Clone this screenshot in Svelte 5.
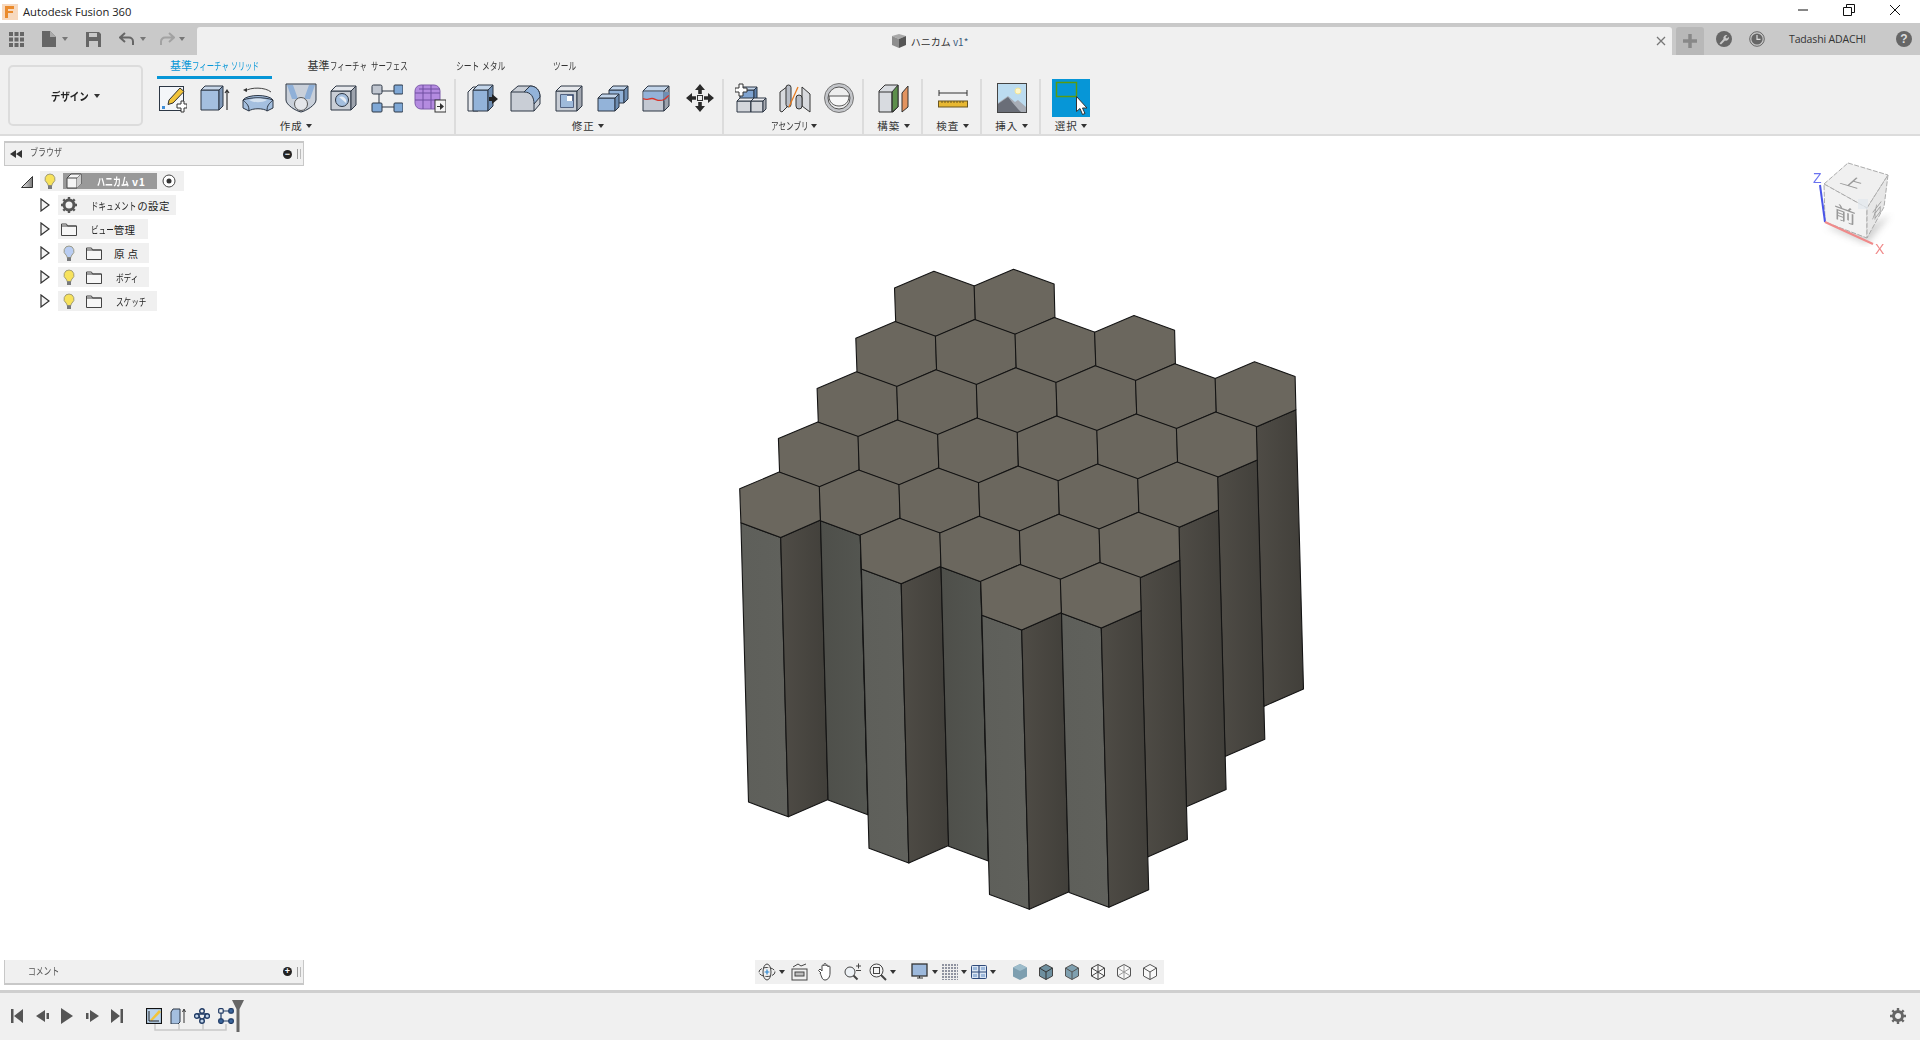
<script lang="ts">
	// hexagon lattice of the honeycomb model, numbers measured off the viewport
	const origin = { x: 933.9, y: 271.3 };
	const stepA = { x: 79.6, y: -2 };
	const stepB = { x: -38.7, y: 50.2 };
	const depth = { x: 7.6, y: 279.3 };
	const rows: [number, number][] = [[0, 1], [0, 3], [0, 5], [0, 5], [0, 5], [2, 5], [4, 5]];
	const shaded = new Set(['4-1', '5-3', '3-0', '3-1']);

	const shape = {
		t: [0, 0],
		rt: [40.6, 14.7],
		rb: [41.4, 48],
		b: [1.6, 65.4],
		lb: [-38.2, 50.7],
		lt: [-39.4, 16.7]
	};

	const pts = (list: number[][]) => list.map((p) => `${p[0].toFixed(1)},${p[1].toFixed(1)}`).join(' ');

	const cells: { key: string; top: string; left: string; right: string }[] = [];
	rows.forEach(([from, to], i) => {
		for (let j = from; j <= to; j++) {
			const x = origin.x + stepA.x * j + stepB.x * i;
			const y = origin.y + stepA.y * j + stepB.y * i;
			const at = (v: number[]) => [x + v[0], y + v[1]];
			const down = (v: number[]) => [x + v[0] + depth.x, y + v[1] + depth.y];
			cells.push({
				key: `${i}-${j}`,
				top: pts([shape.t, shape.rt, shape.rb, shape.b, shape.lb, shape.lt].map(at)),
				left: pts([at(shape.lb), at(shape.b), down(shape.b), down(shape.lb)]),
				right: pts([at(shape.b), at(shape.rb), down(shape.rb), down(shape.b)])
			});
		}
	});

	const tree = [
		{ kana: 'ビュー', rest: '管理', bulb: '', width: 90, pad: 3 },
		{ kana: '', rest: '原 点', bulb: '#b9cdf2', width: 91, pad: 1 },
		{ kana: 'ボディ', rest: '', bulb: '#f7e25c', width: 91, pad: 3 },
		{ kana: 'スケッチ', rest: '', bulb: '#f7e25c', width: 99, pad: 3 }
	];
</script>

<!-- the UI font has tall, narrow kana: squeeze full-width glyphs to the pitch -->
{#snippet kana(text, size = 10.5, pitch = 7.6)}
	<span
		class="kana"
		style="font-size: {size}px; transform: scaleX({(pitch / size).toFixed(3)}); margin-right: {(-text.length * (size - pitch)).toFixed(1)}px"
	>{text}</span>
{/snippet}

{#snippet box(x, y, w, h, d, front, top, side)}
	<polygon points="{x},{y} {x + w},{y} {x + w},{y + h} {x},{y + h}" fill={front} stroke="#2c3644" />
	<polygon points="{x},{y} {x + d},{y - d} {x + w + d},{y - d} {x + w},{y}" fill={top} stroke="#2c3644" />
	<polygon points="{x + w},{y} {x + w + d},{y - d} {x + w + d},{y + h - d} {x + w},{y + h}" fill={side} stroke="#2c3644" />
{/snippet}

{#snippet bulb(color)}
	<svg class="bulb" viewBox="0 0 12 17" width="12" height="17">
		<path d="M6 1a5 5 0 0 0-3 9c.7.6 1 1.400 1 2.500h4c0-1.100.3-1.900 1-2.500a5 5 0 0 0-3-9z" fill={color} stroke="#8d8a70" stroke-width=".8" />
		<rect x="4" y="12.500" width="4" height="3.500" fill="#77797c" />
	</svg>
{/snippet}

{#snippet folder()}
	<svg class="folder" viewBox="0 0 16 13" width="16" height="13">
		<path d="M.5 12.500V1h5l1 2h9v9.500z" fill="#f6f6f6" stroke="#444" />
		<path d="M.5 3h15" stroke="#444" />
	</svg>
{/snippet}

{#snippet expander()}
	<svg class="expander" viewBox="0 0 10 14" width="10" height="14"><path d="M1 1l8 6-8 6z" fill="#f4f4f4" stroke="#333" stroke-width="1.200" /></svg>
{/snippet}

<div class="app">
	<header class="titlebar">
		<svg class="logo" viewBox="0 0 16 16" width="16" height="16">
			<rect width="16" height="16" fill="#f7d9bf" />
			<path d="M3 2h9v3H6v2h5v2H6v5H3z" fill="#ea8a2c" />
		</svg>
		<span class="app-name">Autodesk Fusion 360</span>
		<div class="winctl">
			<svg viewBox="0 0 12 12" width="12" height="12"><path d="M1 6h10" stroke="#111" /></svg>
			<svg viewBox="0 0 12 12" width="12" height="12"><path d="M.5 3.500h8v8h-8zM3.500 3.500v-3h8v8h-3" fill="none" stroke="#111" /></svg>
			<svg viewBox="0 0 12 12" width="12" height="12"><path d="M1 1l10 10M11 1L1 11" stroke="#111" /></svg>
		</div>
	</header>

	<div class="appbar">
		<div class="quick">
			<svg class="q-grid" viewBox="0 0 15 15" width="15" height="15" fill="#666">
				<rect width="4" height="4" /><rect x="5.500" width="4" height="4" /><rect x="11" width="4" height="4" />
				<rect y="5.500" width="4" height="4" /><rect x="5.500" y="5.500" width="4" height="4" /><rect x="11" y="5.500" width="4" height="4" />
				<rect y="11" width="4" height="4" /><rect x="5.500" y="11" width="4" height="4" /><rect x="11" y="11" width="4" height="4" />
			</svg>
			<svg class="q-file" viewBox="0 0 14 16" width="14" height="16"><path d="M0 0h8l6 6v10H0z" fill="#666" /><path d="M8 0v6h6" fill="#aaa" /></svg>
			<i class="caret q-c1"></i>
			<svg class="q-save" viewBox="0 0 15 15" width="15" height="15"><path d="M0 0h13l2 2v13H0z" fill="#666" /><rect x="3" y="1" width="8" height="4" fill="#c8c8c8" /><rect x="3" y="9" width="9" height="6" fill="#c8c8c8" /></svg>
			<svg class="q-undo" viewBox="0 0 15 14" width="15" height="14"><path d="M6 1L1 5.500 6 10M1.500 5.500H10a4 4 0 0 1 4 4V13" fill="none" stroke="#666" stroke-width="2" /></svg>
			<i class="caret q-c2"></i>
			<svg class="q-redo" viewBox="0 0 15 14" width="15" height="14"><path d="M9 1l5 4.500L9 10M13.500 5.500H5a4 4 0 0 0-4 4V13" fill="none" stroke="#a2a2a2" stroke-width="2" /></svg>
			<i class="caret q-c3"></i>
		</div>
		<div class="doc-tab">
			<div class="doc-title">
				<svg viewBox="0 0 16 16" width="16" height="16"><path d="M1 3l7-2 7 2-7 3z" fill="#a9a9a9" /><path d="M1 3l7 3v9l-7-3z" fill="#8e8e8e" /><path d="M15 3L8 6v9l7-3z" fill="#555" /></svg>
				<span>ハニカム <b>v1*</b></span>
			</div>
			<svg class="tab-x" viewBox="0 0 10 10" width="10" height="10"><path d="M1 1l8 8M9 1L1 9" stroke="#777" stroke-width="1.300" /></svg>
		</div>
		<div class="plus-btn"><svg viewBox="0 0 14 14" width="14" height="14"><path d="M7 0v14M0 7h14" stroke="#888" stroke-width="3.500" /></svg></div>
		<div class="account">
			<svg class="a-wrench" viewBox="0 0 16 16" width="16" height="16">
				<circle cx="8" cy="8" r="8" fill="#666" />
				<path d="M3.500 12.500l4-4.500a3 3 0 0 1 3.800-3.800L9.500 6l.5 1 1 .5 1.800-1.800A3 3 0 0 1 9 9.500l-4 4z" fill="#c8c8c8" />
			</svg>
			<svg class="a-clock" viewBox="0 0 16 16" width="16" height="16">
				<circle cx="8" cy="8" r="7.300" fill="#c8c8c8" stroke="#666" />
				<circle cx="8" cy="8" r="5.600" fill="#666" />
				<path d="M8 4v4.300h3.500" fill="none" stroke="#ddd" stroke-width="1.200" />
			</svg>
			<span class="user">Tadashi ADACHI</span>
			<div class="help">?</div>
		</div>
	</div>

	<div class="ribbon">
		<div class="mode"><span>{@render kana('デザイン', 11, 9.4)}</span><i class="caret dark"></i></div>
		<div class="ribbon-main">
			<nav class="tabs">
				<span class="tab active">基準{@render kana('フィーチャ', 10.5, 7.4)} {@render kana('ソリッド', 10.5, 7)}</span>
				<span class="tab">基準{@render kana('フィーチャ', 10.5, 7.4)}&nbsp;&nbsp;{@render kana('サーフェス', 10.5, 7.4)}</span>
				<span class="tab t3">{@render kana('シート', 10.5, 7.8)}&nbsp;{@render kana('メタル', 10.5, 7.8)}</span>
				<span class="tab t4">{@render kana('ツール', 10.5, 7.7)}</span>
			</nav>
			<div class="groups">
				<section class="group g-create">
					<div class="tools">
						<div class="tool">
							<svg viewBox="0 0 30 30" width="30" height="30">
								<rect x="2.500" y="3.500" width="24" height="24" fill="#f4f6f9" stroke="#2c3644" />
								<rect x="5" y="23" width="3" height="3" fill="#3f8fd8" />
								<path d="M12 17l11-12 4 3.500L16 20l-5 1.500z" fill="#f2c43a" stroke="#333" />
								<path d="M20 21h4v-3h3v3h3v4h-3v4h-3v-4h-4z" fill="#fff" stroke="#333" />
							</svg>
						</div>
						<div class="tool">
							<svg viewBox="0 0 30 30" width="30" height="30">
								{@render box(1, 7, 18, 20, 4, '#a4bfdf', '#c9d8ea', '#7f98b8')}
								<path d="M27 27V8M25 10l2-3 2 3" fill="none" stroke="#333" stroke-width="1.200" />
							</svg>
						</div>
						<div class="tool">
							<svg viewBox="0 0 32 30" width="32" height="30">
								<path d="M3 8c6-4 20-4 26 1" fill="none" stroke="#444" />
								<path d="M1 7l4-2v4z" fill="#333" />
								<path d="M1 17c4-6 26-6 30 0v8l-6 3c-3-3-15-3-18 0l-6-3z" fill="#a4bfdf" stroke="#2c3644" />
								<path d="M1 17c4 4 6 5 6 11M31 17c-4 4-6 5-6 11M1 17c8-3 22-3 30 0" fill="none" stroke="#2c3644" />
								<path d="M7 17c5-2 13-2 18 0-5 3-13 3-18 0z" fill="#d5e2f0" />
							</svg>
						</div>
						<div class="tool">
							<svg viewBox="0 0 32 30" width="32" height="30">
								<path d="M1 1h30v16c0 5-10 11-15 12C11 28 1 22 1 17z" fill="#c9d0da" stroke="#2c3644" />
								<path d="M2 2h6l5 14H7zM30 2h-6l-5 14h6z" fill="#8fb0d8" />
								<circle cx="16" cy="21" r="6.500" fill="#e4e6ea" stroke="#555" />
							</svg>
						</div>
						<div class="tool">
							<svg viewBox="0 0 30 30" width="30" height="30">
								{@render box(2, 8, 20, 19, 5, '#c9ced6', '#e6e8ec', '#9da3ad')}
								<circle cx="13" cy="17" r="6.500" fill="#a4bfdf" stroke="#2c3644" />
								<path d="M10 14a5 5 0 0 1 7 6" fill="#e8eef6" />
							</svg>
						</div>
						<div class="tool">
							<svg viewBox="0 0 32 30" width="32" height="30" stroke="#2c3644">
								<path d="M8 8h16M8 8v16M8 24h16" />
								<rect x="1" y="2" width="10" height="9" rx="1.500" fill="#c0c6d0" />
								<rect x="23" y="2" width="9" height="9" rx="1" fill="#7fa8d6" />
								<rect x="1" y="20" width="10" height="9" rx="1" fill="#7fa8d6" />
								<rect x="23" y="20" width="9" height="9" rx="1" fill="#7fa8d6" />
							</svg>
						</div>
						<div class="tool">
							<svg viewBox="0 0 32 30" width="32" height="30">
								<rect x="1" y="2" width="25" height="24" rx="6" fill="#b48be0" stroke="#7e5cab" />
								<path d="M1 10h25M1 17h25M9 2v24M17 2v24M5 6h21" stroke="#6e4ea0" fill="none" />
								<rect x="21" y="17" width="11" height="12" fill="#f4f4f4" stroke="#333" />
								<path d="M23 23h3v-3l4 3.500-4 3.500v-3h-3z" fill="#333" />
							</svg>
						</div>
					</div>
					<div class="label">作成 <i class="caret dark"></i></div>
				</section>

				<section class="group g-modify">
					<div class="tools">
						<div class="tool">
							<svg viewBox="0 0 32 30" width="32" height="30">
								<path d="M1 9l5-5h5v24H1z" fill="#e6e8ec" stroke="#2c3644" />
								{@render box(6, 7, 15, 21, 5, '#93b3d9', '#c3d5ea', '#6f8eb3')}
								<path d="M22 14h3v-3l6 5-6 5v-3h-3z" fill="#222" />
							</svg>
						</div>
						<div class="tool">
							<svg viewBox="0 0 32 30" width="32" height="30">
								<path d="M1 9l7-6h12c6 0 10 4 10 11v7l-6 7H1z" fill="#c9ced6" stroke="#2c3644" />
								<path d="M14 9l6-6c6 0 10 4 10 11l-6 7c0-7-3-12-10-12z" fill="#93b3d9" stroke="#2c3644" />
								<path d="M1 9h13M24 21v7" stroke="#2c3644" />
							</svg>
						</div>
						<div class="tool">
							<svg viewBox="0 0 30 30" width="30" height="30">
								{@render box(2, 8, 21, 20, 5, '#c9ced6', '#e6e8ec', '#a3a8b1')}
								<rect x="7" y="12" width="12" height="12" fill="#fff" stroke="#2c3f66" stroke-width="1.500" />
								<path d="M7 12h6v6h6v6H7z" fill="#9fbadb" />
							</svg>
						</div>
						<div class="tool">
							<svg viewBox="0 0 32 30" width="32" height="30">
								{@render box(12, 7, 15, 13, 4, '#93b3d9', '#c3d5ea', '#6f8eb3')}
								{@render box(1, 15, 17, 13, 4, '#93b3d9', '#c3d5ea', '#6f8eb3')}
							</svg>
						</div>
						<div class="tool">
							<svg viewBox="0 0 30 30" width="30" height="30">
								{@render box(2, 8, 21, 20, 5, '#c3c8d2', '#c3d5ea', '#9da3ad')}
								<path d="M2.500 8.500h20v8c-5 3-7-1-11-1s-5 2-9 0z" fill="#93b3d9" />
								<path d="M23 9h5v5c-2 1-3 3-5 4z" fill="#6f8eb3" />
								<path d="M2 15.500c4 2 5 0 9 0s6 4 12 1c2-1 3-3 5-4" fill="none" stroke="#d8342a" stroke-width="1.300" />
							</svg>
						</div>
						<div class="tool">
							<svg viewBox="0 0 30 30" width="30" height="30">
								<path d="M15 1l5 6h-3.200v4h-3.600V7H10zM15 29l-5-6h3.200v-4h3.600v4H20zM1 15l6-5v3.200h4v3.600H7V20zM29 15l-6 5v-3.200h-4v-3.600h4V10z" fill="#2b2b2b" />
								<rect x="12.500" y="12.500" width="5" height="5" fill="#eee" stroke="#333" />
							</svg>
						</div>
					</div>
					<div class="label">修正 <i class="caret dark"></i></div>
				</section>

				<section class="group g-assembly">
					<div class="tools">
						<div class="tool">
							<svg viewBox="0 0 32 30" width="32" height="30">
								{@render box(5, 7, 14, 12, 3, '#7fa3d0', '#c3d5ea', '#5f81ad')}
								{@render box(2, 18, 14, 11, 3, '#d3d6db', '#ecedf0', '#a8abb2')}
								{@render box(16, 18, 12, 11, 3, '#d3d6db', '#ecedf0', '#a8abb2')}
								<path d="M4 1h4v4h4v4H8v4H4V9H0V5h4z" fill="#fff" stroke="#333" />
							</svg>
						</div>
						<div class="tool">
							<svg viewBox="0 0 32 30" width="32" height="30">
								<path d="M1 9l8-6v20l-6 6-2-1z" fill="#d8dade" stroke="#333" />
								<rect x="7" y="2" width="5" height="22" rx="2.500" fill="#b7bcc5" stroke="#333" />
								<path d="M31 11l-8-7v19l8 6z" fill="#d8dade" stroke="#333" />
								<rect x="17" y="12" width="6" height="14" rx="3" fill="#b7bcc5" stroke="#333" />
								<path d="M10 24L19 4" stroke="#e87b1e" stroke-width="1.300" />
							</svg>
						</div>
						<div class="tool">
							<svg viewBox="0 0 32 30" width="32" height="30">
								<circle cx="16" cy="15" r="14.500" fill="#c4c6ca" stroke="#777" />
								<circle cx="16" cy="15" r="11" fill="#eee" stroke="#555" />
								<path d="M6 13h20c0 6-4 10-10 10S6 19 6 13z" fill="#f7f7f7" stroke="#555" />
							</svg>
						</div>
					</div>
					<div class="label">{@render kana('アセンブリ')} <i class="caret dark"></i></div>
				</section>

				<section class="group g-single">
					<div class="tools">
						<div class="tool">
							<svg viewBox="0 0 32 30" width="32" height="30">
								<path d="M1 8l6-6h13v22l-5 5H1z" fill="#d8dbe0" stroke="#333" />
								<path d="M14 9l6-7v22l-6 5z" fill="#5d8f4c" stroke="#333" />
								<path d="M1 9h13v20" fill="none" stroke="#333" />
								<path d="M24 10l6-7v21l-6 5z" fill="#e2935f" stroke="#333" />
							</svg>
						</div>
					</div>
					<div class="label">構築 <i class="caret dark"></i></div>
				</section>

				<section class="group g-single">
					<div class="tools">
						<div class="tool">
							<svg viewBox="0 0 30 30" width="30" height="30">
								<path d="M1 7v6M1 10h28M29 7v6" stroke="#333" fill="none" />
								<rect x=".5" y="18" width="29" height="6" fill="#e8b832" stroke="#6a5620" />
								<path d="M4 18v2M7 18v2M10 18v2M13 18v2M16 18v2M19 18v2M22 18v2M25 18v2" stroke="#6a5620" />
							</svg>
						</div>
					</div>
					<div class="label">検査 <i class="caret dark"></i></div>
				</section>

				<section class="group g-single">
					<div class="tools">
						<div class="tool">
							<svg viewBox="0 0 30 30" width="30" height="30">
								<rect x=".5" y=".5" width="29" height="29" fill="#bcdcf0" stroke="#444" />
								<circle cx="21" cy="8" r="3" fill="#fff7c8" stroke="#f2e59a" />
								<path d="M1 29V20l10-7 7 6 3-2 8 7v5z" fill="#a8adb6" />
								<path d="M1 29V21l10-7c4 5 8 10 13 15z" fill="#6a6e78" />
							</svg>
						</div>
					</div>
					<div class="label">挿入 <i class="caret dark"></i></div>
				</section>

				<section class="group g-select">
					<div class="tools">
						<div class="select-btn">
							<svg viewBox="0 0 38 38" width="38" height="38">
								<rect x="4.500" y="3.500" width="20" height="14" fill="none" stroke="#5a9a10" stroke-width="1.500" />
								<path d="M24.500 17.500v15l3.500-3 2.500 6 2.500-1-2.500-5.500h4.500z" fill="#fff" stroke="#333" />
							</svg>
						</div>
					</div>
					<div class="label">選択 <i class="caret dark"></i></div>
				</section>
			</div>
		</div>
	</div>

	<main class="viewport">
		<svg class="model" viewBox="0 136 1920 854" width="1920" height="854">
			<defs>
				<linearGradient id="lit" x1="0" x2="1" y1="0" y2="0"><stop offset="0" stop-color="#5e5f5a" /><stop offset="1" stop-color="#60615c" /></linearGradient>
				<linearGradient id="dim" x1="0" x2="1" y1="0" y2="0"><stop offset="0" stop-color="#4e4f4a" /><stop offset="1" stop-color="#545651" /></linearGradient>
				<linearGradient id="side" x1="0" x2="1" y1="0" y2="0"><stop offset="0" stop-color="#4f4c46" /><stop offset="1" stop-color="#413f3a" /></linearGradient>
			</defs>
			<g stroke="#141414" stroke-width="1.100" stroke-linejoin="round">
				{#each cells as cell (cell.key)}
					<polygon points={cell.left} fill={shaded.has(cell.key) ? 'url(#dim)' : 'url(#lit)'} />
					<polygon points={cell.right} fill="url(#side)" />
				{/each}
				{#each cells as cell (cell.key)}
					<polygon points={cell.top} fill="#6b675e" />
				{/each}
			</g>
		</svg>

		<svg class="viewcube" viewBox="1800 150 110 110" width="110" height="110">
			<defs><filter id="soft"><feGaussianBlur stdDeviation="3.500" /></filter><filter id="blur1"><feGaussianBlur stdDeviation=".4" /></filter></defs>
			<polygon points="1825,226 1867,244 1890,215 1870,225" fill="#999" opacity=".45" filter="url(#soft)" />
			<g filter="url(#blur1)">
				<polygon points="1848,163 1888,175 1867,208 1824,184" fill="#f0f0f0" stroke="#aaa" stroke-dasharray="5 1.500" />
				<polygon points="1824,184 1867,208 1867,238 1825,222" fill="#f2f2f2" stroke="#aaa" stroke-dasharray="5 1.500" />
				<polygon points="1867,208 1888,175 1884,207 1867,238" fill="#e7e7e7" stroke="#aaa" stroke-dasharray="5 1.500" />
				<rect x="1858" y="199" width="10" height="10" fill="#e3e8ee" opacity=".8" />
				<text class="cube-text" transform="matrix(.8 .24 -.45 .4 1848.500 186)" font-size="24" text-anchor="middle">上</text>
				<text class="cube-text" transform="matrix(1 .37 0 .8 1845 221)" font-size="22" text-anchor="middle">前</text>
				<text class="cube-text" transform="matrix(.55 -.7 0 .8 1877 216)" font-size="18" text-anchor="middle">右</text>
				<path d="M1825 222l-5-37" stroke="#4a55e8" stroke-width="2" />
				<path d="M1825 222l48 22" stroke="#f08a8a" stroke-width="2" />
				<text class="axis z" x="1813" y="183">Z</text>
				<text class="axis x" x="1875" y="254">X</text>
			</g>
		</svg>

		<div class="overlay">
			<div class="side">
				<div class="panel">
					<svg viewBox="0 0 12 8" width="12" height="8"><path d="M6 0v8L0 4zM12 0v8L6 4z" fill="#333" /></svg>
					<span class="panel-title">{@render kana('ブラウザ', 10.5, 8)}</span>
					<span class="dot">−</span>
					<i class="grip"></i>
				</div>

				<div class="tree">
					<div class="row root">
						<svg class="collapse" viewBox="0 0 12 12" width="12" height="12"><path d="M11.500.5v11H.5z" fill="url(#rootfill)" stroke="#333" /><defs><linearGradient id="rootfill"><stop offset="0" stop-color="#eee" /><stop offset="1" stop-color="#777" /></linearGradient></defs></svg>
						<div class="chip root-chip">
							{@render bulb('#f7e25c')}
							<div class="active-doc">
								<svg viewBox="0 0 16 16" width="16" height="16"><path d="M1 5l4-4h10v10l-4 4H1z" fill="#f4f4f4" stroke="#444" /><path d="M1 5h10v10M11 5l4-4" fill="none" stroke="#444" /><path d="M11 5l4-4v10l-4 4z" fill="#ccc" /></svg>
								<span>{@render kana('ハニカム', 11, 8)}&nbsp;v1</span>
							</div>
							<svg class="radio" viewBox="0 0 14 14" width="14" height="14"><circle cx="7" cy="7" r="6" fill="#fff" stroke="#444" /><circle cx="7" cy="7" r="2.500" fill="#333" /></svg>
						</div>
					</div>

					<div class="row">
						{@render expander()}
						<div class="chip settings">
							<svg viewBox="0 0 16 16" width="16" height="16">
								<circle cx="8" cy="8" r="5" fill="none" stroke="#555" stroke-width="3" />
								<path d="M8 0v3M8 13v3M0 8h3M13 8h3M2.300 2.300l2.200 2.200M11.500 11.500l2.200 2.200M13.700 2.300l-2.200 2.200M4.500 11.500l-2.200 2.200" stroke="#555" stroke-width="2.400" />
							</svg>
							<span>{@render kana('ドキュメント', 10.5, 7.3)}の設定</span>
						</div>
					</div>

					{#each tree as item}
						<div class="row">
							{@render expander()}
							<div class="chip" class:plain={!item.bulb} style="width: {item.width}px">
								{#if item.bulb}{@render bulb(item.bulb)}{/if}
								{@render folder()}
								<span style="margin-left: {item.pad}px">{#if item.kana}{@render kana(item.kana)}{/if}{item.rest}</span>
							</div>
						</div>
					{/each}
				</div>
			</div>

			<div class="bottom">
				<div class="panel comments">
					<span class="panel-title">{@render kana('コメント', 10.5, 7.8)}</span>
					<span class="dot">+</span>
					<i class="grip"></i>
				</div>

				<div class="navbar">
					<svg viewBox="0 0 18 18" width="18" height="18"><ellipse cx="9" cy="9" rx="8" ry="4.500" fill="none" stroke="#444" stroke-dasharray="5 1.500" /><ellipse cx="9" cy="9" rx="4" ry="8" fill="none" stroke="#444" /><path d="M8 5h2v3h3v2h-3v3H8v-3H5V8h3z" fill="#2f88d0" transform="scale(.6) translate(6 6)" /></svg>
					<i class="caret dark"></i>
					<svg class="n-look" viewBox="0 0 18 18" width="18" height="18"><rect x="1" y="6" width="15" height="11" fill="#f0f0f0" stroke="#444" /><rect x="4" y="9" width="9" height="4" fill="#bbb" stroke="#444" /><path d="M2 4l5-3 3 2 5-2" fill="none" stroke="#444" /></svg>
					<svg class="n-hand" viewBox="0 0 18 18" width="18" height="18"><path d="M4 10L1.500 7.500 3 6l2 2V3a1 1 0 0 1 2 0V1.500a1 1 0 0 1 2 0V3a1 1 0 0 1 2 0v1a1 1 0 0 1 2 0v6c0 4-2 7-5 7s-3-3-5-7z" fill="#fff" stroke="#444" /></svg>
					<svg class="n-zoom" viewBox="0 0 18 18" width="18" height="18"><circle cx="7" cy="9" r="5" fill="#eef2f6" stroke="#444" /><path d="M10.500 12.500l4 4" stroke="#444" stroke-width="2" /><path d="M13 3h5M15.500.5v5M13 7.500h5" stroke="#444" /></svg>
					<svg class="n-fit" viewBox="0 0 18 18" width="18" height="18"><circle cx="7.500" cy="7.500" r="6.500" fill="#f4f4f4" stroke="#444" /><rect x="4.500" y="4.500" width="6" height="6" fill="none" stroke="#444" /><path d="M12 12l5 5" stroke="#444" stroke-width="2" /></svg>
					<i class="caret dark"></i>
					<svg class="n-display" viewBox="0 0 18 18" width="18" height="18"><rect x="1" y="1" width="15" height="12" fill="#9db9dc" stroke="#333" stroke-width="1.300" /><path d="M6 15h6M8.500 13v2" stroke="#333" /></svg>
					<i class="caret dark"></i>
					<svg class="n-grid" viewBox="0 0 16 16" width="16" height="16"><rect width="16" height="16" fill="#8f93a0" /><path d="M2.500 0v16M5.500 0v16M8.500 0v16M11.500 0v16M14.500 0v16M0 2.500h16M0 5.500h16M0 8.500h16M0 11.500h16M0 14.500h16" stroke="#eee" /></svg>
					<i class="caret dark"></i>
					<svg class="n-views" viewBox="0 0 16 14" width="16" height="14"><rect x=".5" y=".5" width="15" height="13" rx="1" fill="#dbe6f3" stroke="#2f4a7a" /><path d="M8 0v14M0 7h16" stroke="#2f4a7a" stroke-width="1.200" /><rect x="2" y="2" width="4" height="3" fill="#9db9dc" /><rect x="10" y="2" width="4" height="3" fill="#9db9dc" /><rect x="2" y="9" width="4" height="3" fill="#9db9dc" /><rect x="10" y="9" width="4" height="3" fill="#9db9dc" /></svg>
					<i class="caret dark"></i>
					<div class="cubes">
						<svg viewBox="0 0 14 16" width="14" height="16"><path d="M7 0l7 3.500v9L7 16l-7-3.500v-9z" fill="#7e9fb0" /><path d="M7 7l7-3.500-7-3.500-7 3.500z" fill="#9dbccb" /></svg>
						<svg viewBox="0 0 14 16" width="14" height="16"><path d="M7 .5l6.500 3.500v8L7 15.500.5 12V4z" fill="#6e8f9f" stroke="#444" /><path d="M.5 4L7 8l6.500-4M7 8v7.500" fill="none" stroke="#333" /></svg>
						<svg viewBox="0 0 14 16" width="14" height="16"><path d="M7 .5l6.500 3.500v8L7 15.500.5 12V4z" fill="#7fa0b0" stroke="#555" /><path d="M.5 4L7 8l6.500-4M7 8v7.500" fill="none" stroke="#555" /></svg>
						<svg viewBox="0 0 14 16" width="14" height="16"><path d="M7 .5l6.500 3.500v8L7 15.500.5 12V4z" fill="#f8f8f8" stroke="#444" /><path d="M.5 4l13 8M13.500 4l-13 8M7 .5v15" fill="none" stroke="#444" /></svg>
						<svg viewBox="0 0 14 16" width="14" height="16"><path d="M7 .5l6.500 3.500v8L7 15.500.5 12V4z" fill="#f8f8f8" stroke="#555" /><path d="M.5 4L7 8l6.500-4M7 8v7.500M7 .5V8M.5 12L7 8l6.500 4" fill="none" stroke="#999" /></svg>
						<svg viewBox="0 0 14 16" width="14" height="16"><path d="M7 .5l6.500 3.500v8L7 15.500.5 12V4z" fill="#f8f8f8" stroke="#555" /><path d="M.5 4L7 8l6.500-4M7 8v7.500" fill="none" stroke="#555" /></svg>
					</div>
				</div>
			</div>
		</div>
	</main>

	<footer class="timeline">
		<div class="playback">
			<svg viewBox="0 0 12 14" width="12" height="14"><path d="M0 0h2.500v14H0zM12 0v14L3 7z" fill="#555" /></svg>
			<svg viewBox="0 0 13 14" width="13" height="14"><path d="M9 1v12L0 7zM10.500 4H13v6h-2.500z" fill="#555" /></svg>
			<svg viewBox="0 0 12 16" width="12" height="16"><path d="M0 0l12 8-12 8z" fill="#555" /></svg>
			<svg viewBox="0 0 13 14" width="13" height="14"><path d="M4 1v12l9-6zM0 4h2.500v6H0z" fill="#555" /></svg>
			<svg viewBox="0 0 12 14" width="12" height="14"><path d="M0 0l9 7-9 7zM9.500 0H12v14H9.500z" fill="#555" /></svg>
		</div>
		<div class="steps">
			<svg viewBox="0 0 16 16" width="16" height="16"><rect x=".5" y=".5" width="15" height="15" fill="#bcd4ec" stroke="#111" stroke-width="1.200" /><path d="M4 12l9-10 2 2-9 9z" fill="#f2c43a" /><path d="M3 3v10h10" fill="none" stroke="#222" /></svg>
			<svg viewBox="0 0 16 16" width="16" height="16"><path d="M1 4l2-3h7v13l-2 2H1z" fill="#a4bfdf" stroke="#2c3644" /><path d="M14 15V2M12.500 4L14 1l1.500 3" fill="none" stroke="#333" /></svg>
			<svg viewBox="0 0 16 16" width="16" height="16" fill="#c3d5ea" stroke="#1f3a64" stroke-width="1.400"><path d="M4 6l4 8 4-8z" fill="#eee" /><circle cx="8" cy="3" r="2.300" fill="#eee" /><circle cx="2.800" cy="8" r="2.300" /><circle cx="13.200" cy="8" r="2.300" /><circle cx="8" cy="13" r="2.300" /></svg>
			<svg viewBox="0 0 16 16" width="16" height="16" stroke="#1f3a64" stroke-width="1.200"><path d="M3 3h10M3 3v10M3 13h10" /><rect x=".7" y=".7" width="4.500" height="4.500" rx="1" fill="#f0f0f0" /><rect x="10.800" y=".7" width="4.500" height="4.500" rx="1.500" fill="#3c669c" /><rect x=".7" y="10.800" width="4.500" height="4.500" rx="1.500" fill="#3c669c" /><rect x="10.800" y="10.800" width="4.500" height="4.500" rx="1.500" fill="#3c669c" /></svg>
			<svg class="ticks" viewBox="0 0 73 7" width="73" height="7"><path d="M1 0v6h71V0M25 0v6M49 0v6" fill="none" stroke="#c8c8c8" stroke-width="1.500" /></svg>
			<svg class="marker" viewBox="0 0 12 32" width="12" height="32"><path d="M0 0h12L7.500 9v23h-3V9z" fill="#666" /></svg>
		</div>
		<svg class="settings-gear" viewBox="0 0 16 16" width="16" height="16">
			<circle cx="8" cy="8" r="4.500" fill="none" stroke="#666" stroke-width="3" />
			<path d="M8 0v3M8 13v3M0 8h3M13 8h3M2.300 2.300l2.200 2.200M11.500 11.500l2.200 2.200M13.700 2.300l-2.200 2.200M4.500 11.500l-2.200 2.200" stroke="#666" stroke-width="2.400" />
		</svg>
	</footer>
</div>

<style>
	:global(body) {
		margin: 0;
		background: #fff;
	}

	.app {
		width: 1920px;
		height: 1040px;
		display: flex;
		flex-direction: column;
		overflow: hidden;
		font-family: "Noto Sans CJK JP", "Noto Sans", sans-serif;
		font-size: 11px;
		color: #333;
	}

	.kana {
		display: inline-block;
		transform-origin: 0 50%;
		white-space: pre;
		letter-spacing: 0;
	}

	.caret {
		display: inline-block;
		width: 0;
		height: 0;
		border-left: 3.5px solid transparent;
		border-right: 3.5px solid transparent;
		border-top: 4px solid #777;
	}

	.caret.dark {
		border-top-color: #333;
	}

	/* title bar */
	.titlebar {
		height: 23px;
		display: flex;
		align-items: center;
		flex: none;
		background: #fff;
	}

	.logo {
		margin-left: 2px;
	}

	.app-name {
		margin-left: 5px;
		font-family: "Open Sans", sans-serif;
		font-size: 11.2px;
		color: #222;
	}

	.winctl {
		margin-left: auto;
		display: flex;
		gap: 34px;
		margin-right: 19px;
		margin-top: -3px;
	}

	/* quick access row */
	.appbar {
		height: 32px;
		flex: none;
		display: flex;
		align-items: flex-end;
		background: #c9c9c9;
		box-sizing: border-box;
	}

	.quick {
		width: 197px;
		height: 32px;
		flex: none;
		display: flex;
		align-items: center;
	}

	.q-grid {
		margin-left: 9px;
	}

	.q-file {
		margin-left: 18px;
	}

	.q-c1 {
		margin-left: 6px;
	}

	.q-save {
		margin-left: 18px;
	}

	.q-undo {
		margin-left: 18px;
	}

	.q-c2 {
		margin-left: 6px;
	}

	.q-redo {
		margin-left: 14px;
	}

	.q-c3 {
		margin-left: 4px;
	}

	.doc-tab {
		width: 1475px;
		height: 28px;
		flex: none;
		display: flex;
		align-items: center;
		justify-content: center;
		position: relative;
		background: #f0f0f0;
		border-radius: 3px 3px 0 0;
	}

	.doc-title {
		display: flex;
		align-items: center;
		gap: 4px;
		font-size: 10px;
		transform: translateX(-5px);
	}

	.doc-title b {
		font-weight: 400;
		color: #3a5a7a;
	}

	.tab-x {
		position: absolute;
		right: 6px;
		top: 9px;
	}

	.plus-btn {
		width: 28px;
		height: 28px;
		margin-left: 4px;
		flex: none;
		display: flex;
		align-items: center;
		justify-content: center;
		background: #b8b8b8;
		border-radius: 3px 3px 0 0;
	}

	.account {
		height: 32px;
		display: flex;
		align-items: center;
		flex: none;
	}

	.a-wrench {
		margin-left: 12px;
	}

	.a-clock {
		margin-left: 17px;
	}

	.user {
		margin-left: 24px;
		width: 82px;
		font-family: "Open Sans", sans-serif;
		font-size: 10.5px;
		letter-spacing: -0.15px;
		color: #333;
		white-space: nowrap;
	}

	.help {
		width: 16px;
		height: 16px;
		margin-left: 25px;
		border-radius: 50%;
		background: #666;
		color: #ddd;
		font: bold 12px/16px "Liberation Sans", sans-serif;
		text-align: center;
	}

	/* ribbon */
	.ribbon {
		height: 81px;
		flex: none;
		box-sizing: border-box;
		display: flex;
		padding-left: 8px;
		background: #f0f0f0;
		border-bottom: 2px solid #dcdcdc;
	}

	.mode {
		width: 135px;
		height: 61px;
		margin-top: 10px;
		box-sizing: border-box;
		flex: none;
		display: flex;
		align-items: center;
		justify-content: center;
		gap: 6px;
		border: 2px solid #dcdcdc;
		border-radius: 5px;
		font-weight: 700;
		color: #222;
	}

	.ribbon-main {
		flex: 1;
	}

	.tabs {
		height: 24px;
		display: flex;
		gap: 28px;
		padding-left: 14px;
	}

	.tab {
		width: 115px;
		height: 21px;
		line-height: 20px;
		text-align: center;
		font-size: 11px;
		color: #333;
		white-space: nowrap;
		box-sizing: content-box;
	}

	.tab.active {
		color: #0696d7;
		border-bottom: 3px solid #0696d7;
	}

	.t3 {
		width: 70px;
		margin-left: 3px;
	}

	.t4 {
		width: 40px;
		margin-left: 1px;
	}

	.groups {
		display: flex;
		margin-left: 7px;
		height: 55px;
	}

	.group {
		box-sizing: border-box;
		border-right: 2px solid #dcdcdc;
		margin-right: 2px;
	}

	.g-create {
		width: 306px;
	}

	.g-create .label {
		padding-right: 12px;
	}

	.g-modify {
		width: 266px;
	}

	.g-modify .tools {
		padding-left: 3px;
	}

	.g-modify .label {
		padding-right: 4px;
	}

	.g-modify .tool {
		width: 43.4px;
	}

	.g-assembly {
		width: 138px;
	}

	.g-assembly .tools {
		padding-left: 3px;
	}

	.g-assembly .tool {
		width: 44px;
	}

	.g-single {
		width: 57px;
	}

	.g-select {
		width: 60px;
		border-right: 0;
		padding-left: 9px;
	}

	.tools {
		display: flex;
		height: 37px;
	}

	.tool {
		width: 43px;
		display: flex;
		align-items: center;
		justify-content: center;
		flex: none;
	}

	.g-single .tool {
		width: 56px;
	}

	.select-btn {
		width: 38px;
		height: 38px;
		background: #0696d7;
	}

	.select-btn svg {
		display: block;
	}

	.label {
		height: 18px;
		line-height: 19px;
		text-align: center;
		font-size: 10.5px;
		letter-spacing: 1px;
		color: #333;
		white-space: nowrap;
	}

	.g-select .label {
		width: 38px;
		position: relative;
		z-index: 1;
	}

	.label .caret {
		vertical-align: 2px;
	}

	/* viewport */
	.viewport {
		flex: 1;
		position: relative;
		background: #fff;
		overflow: hidden;
	}

	.model {
		position: absolute;
		left: 0;
		top: 0;
	}

	.viewcube {
		position: absolute;
		left: 1800px;
		top: 14px;
	}

	.cube-text {
		font-family: "Noto Sans CJK JP", sans-serif;
		fill: #999;
	}

	.axis {
		font-family: "Liberation Sans", sans-serif;
		font-size: 14px;
	}

	.axis.z {
		fill: #6a72f0;
	}

	.axis.x {
		fill: #f08a8a;
	}

	.overlay {
		position: absolute;
		inset: 0;
		padding: 5px 0 5px 4px;
		box-sizing: border-box;
		display: flex;
		flex-direction: column;
		justify-content: space-between;
	}

	.panel {
		width: 300px;
		height: 25px;
		box-sizing: border-box;
		display: flex;
		align-items: center;
		padding-left: 5px;
		background: #f0f0f0;
		border: 2px solid #c8c8c8;
		border-width: 2px 1px 1px 1px;
	}

	.comments {
		border-width: 0 1px 2px 1px;
	}

	.panel-title {
		margin-left: 8px;
		line-height: 16px;
		color: #555;
		transform: translateY(-3px);
	}

	.comments .panel-title {
		margin-left: 18px;
		transform: translateY(-1px);
	}

	.dot {
		margin-left: auto;
		width: 9px;
		height: 9px;
		border-radius: 50%;
		background: #222;
		color: #fff;
		font: bold 9px/9px "Liberation Sans", sans-serif;
		text-align: center;
	}

	.grip {
		width: 2px;
		height: 10px;
		margin: 0 2px 0 5px;
		border-left: 1px solid #999;
		border-right: 1px solid #bbb;
	}

	.tree {
		padding-top: 3px;
	}

	.row {
		height: 24px;
		display: flex;
		align-items: center;
		padding-left: 36px;
		font-size: 10.5px;
		letter-spacing: 0.3px;
		color: #222;
	}

	.row.root {
		padding-left: 17px;
	}

	.collapse {
		margin-top: 1px;
	}

	.expander,
	.bulb,
	.folder {
		flex: none;
	}

	.chip {
		height: 20px;
		margin-left: 8px;
		padding-left: 5px;
		display: flex;
		align-items: center;
		box-sizing: border-box;
		background: #f0f0f0;
		gap: 11px;
		white-space: nowrap;
	}

	.chip span {
		flex: none;
	}

	.chip.plain {
		padding-left: 3px;
	}

	.settings {
		width: 118px;
		padding-left: 3px;
		gap: 6px;
	}

	.settings span {
		letter-spacing: 0.4px;
		margin-left: 8px;
	}

	.settings span span {
		margin-left: 0;
	}

	.root-chip {
		width: 144px;
		margin-left: 7px;
		padding-left: 4px;
		gap: 7px;
	}

	.active-doc {
		width: 94px;
		height: 16px;
		display: flex;
		align-items: center;
		gap: 15px;
		padding-left: 3px;
		box-sizing: border-box;
		background: #999;
		color: #fff;
		font-weight: 700;
		letter-spacing: 0.6px;
	}

	.radio {
		margin-left: -2px;
	}

	.bottom {
		display: flex;
		align-items: flex-start;
		height: 25px;
	}

	.navbar {
		margin-left: 451px;
		width: 409px;
		height: 24px;
		display: flex;
		align-items: center;
		background: #f0f0f0;
		padding-left: 3px;
		box-sizing: border-box;
	}

	.navbar > svg,
	.navbar > .caret {
		flex: none;
	}

	.navbar > .caret {
		margin-left: 3px;
	}

	.n-look {
		margin-left: 6px;
	}

	.n-hand {
		margin-left: 8px;
	}

	.n-zoom {
		margin-left: 8px;
	}

	.n-fit {
		margin-left: 8px;
	}

	.n-display {
		margin-left: 15px;
	}

	.n-grid {
		margin-left: 4px;
	}

	.n-views {
		margin-left: 4px;
	}

	.cubes {
		display: flex;
		gap: 12px;
		margin-left: 17px;
	}

	/* timeline */
	.timeline {
		height: 50px;
		flex: none;
		box-sizing: border-box;
		display: flex;
		align-items: center;
		background: #f0f0f0;
		border-top: 3px solid #cfcfcf;
		padding-bottom: 2px;
	}

	.playback {
		display: flex;
		align-items: center;
		gap: 12.5px;
		margin-left: 11px;
	}

	.steps {
		position: relative;
		display: flex;
		align-items: center;
		gap: 8px;
		margin-left: 23px;
		height: 32px;
	}

	.ticks {
		position: absolute;
		left: 8px;
		top: 24px;
	}

	.marker {
		margin-left: -10px;
	}

	.settings-gear {
		margin-left: auto;
		margin-right: 14px;
	}
</style>
